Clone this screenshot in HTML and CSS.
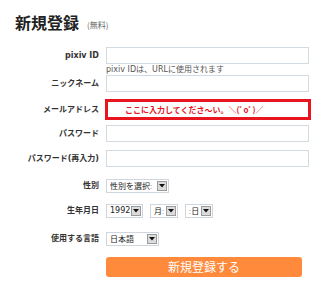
FILE: index.html
```html
<!DOCTYPE html>
<html lang="ja">
<head>
<meta charset="utf-8">
<title>新規登録</title>
<link rel="stylesheet" href="styles.css">
</head>
<body>
<div class="page">
  <h1 class="title">新規登録<span class="free">(無料)</span></h1>
  <form class="form">
    <div class="row row-id">
      <label class="label">pixiv ID</label>
      <div class="field">
        <input class="text-input" type="text">
        <div class="help">pixiv IDは、URLに使用されます</div>
      </div>
    </div>
    <div class="row row-nick">
      <label class="label">ニックネーム</label>
      <div class="field"><input class="text-input" type="text"></div>
    </div>
    <div class="row row-mail">
      <label class="label">メールアドレス</label>
      <div class="field field-alert"><input class="text-input alert-input" type="text" value="ここに入力してくださ～い。＼(ﾟoﾟ)／"></div>
    </div>
    <div class="row row-pass">
      <label class="label">パスワード</label>
      <div class="field"><input class="text-input" type="password"></div>
    </div>
    <div class="row row-pass2">
      <label class="label">パスワード(再入力)</label>
      <div class="field"><input class="text-input" type="password"></div>
    </div>
    <div class="row row-gender">
      <label class="label">性別</label>
      <div class="field">
        <div class="select sel-gender"><span class="sel-text">性別を選択<span class="dim">:</span></span><span class="arrow"><svg width="6" height="4" viewBox="0 0 6 4"><path d="M0 0H6L3 3.5Z" fill="#111"/></svg></span></div>
      </div>
    </div>
    <div class="row row-birth">
      <label class="label">生年月日</label>
      <div class="field field-inline">
        <div class="select sel-year"><span class="sel-text">1992</span><span class="arrow"><svg width="6" height="4" viewBox="0 0 6 4"><path d="M0 0H6L3 3.5Z" fill="#111"/></svg></span></div>
        <div class="select sel-md"><span class="sel-text">月<span class="dim">:</span></span><span class="arrow"><svg width="6" height="4" viewBox="0 0 6 4"><path d="M0 0H6L3 3.5Z" fill="#111"/></svg></span></div>
        <div class="select sel-md"><span class="sel-text"><span class="dim">:</span>日</span><span class="arrow"><svg width="6" height="4" viewBox="0 0 6 4"><path d="M0 0H6L3 3.5Z" fill="#111"/></svg></span></div>
      </div>
    </div>
    <div class="row row-lang">
      <label class="label">使用する言語</label>
      <div class="field">
        <div class="select sel-lang"><span class="sel-text">日本語</span><span class="arrow"><svg width="6" height="4" viewBox="0 0 6 4"><path d="M0 0H6L3 3.5Z" fill="#111"/></svg></span></div>
      </div>
    </div>
    <div class="actions">
      <button class="submit" type="button">新規登録する</button>
    </div>
  </form>
</div>
</body>
</html>
```
FILE: styles.css
```css
html, body {
  margin: 0;
  padding: 0;
  background: #fff;
}
body {
  font-family: "DejaVu Sans", "Noto Sans CJK JP", sans-serif;
  color: #333;
}
.page {
  padding-top: 12px;
}
.title {
  margin: 0 0 0 15px;
  font-family: "Noto Sans CJK JP", sans-serif;
  font-size: 16px;
  line-height: 20px;
  font-weight: bold;
  color: #222;
}
.free {
  font-size: 8px;
  font-weight: normal;
  color: #666;
  margin-left: 8px;
  vertical-align: 1px;
}
.form {
  margin: 12px 0 0 0;
  display: flex;
  flex-direction: column;
}
.row {
  display: flex;
  align-items: flex-start;
}
.label {
  width: 99px;
  flex: none;
  text-align: right;
  font-size: 8px;
  font-weight: bold;
  color: #333;
  line-height: 17px;
  white-space: nowrap;
}
.field {
  margin-left: 7px;
  display: flex;
  flex-direction: column;
}
.field-inline {
  flex-direction: row;
  gap: 7px;
}
.text-input {
  box-sizing: border-box;
  width: 203px;
  height: 17px;
  border: 1px solid #d2dae2;
  margin: 0;
  padding: 0 3px;
  font-family: "DejaVu Sans", "Noto Sans CJK JP", sans-serif;
  font-size: 8px;
  background: #fff;
  outline: none;
}
.help {
  font-size: 8px;
  line-height: 10px;
  margin-top: 1px;
  color: #555;
  white-space: nowrap;
}
.row-mail {
  margin-top: 7px;
}
.row-mail .label {
  line-height: 21px;
}
.field-alert {
  margin-left: 6px;
}
.alert-input {
  width: 206px;
  height: 21px;
  border: 3px solid #e8141e;
  padding-left: 17px;
  color: #e8141e;
  font-weight: bold;
  font-family: "Noto Sans CJK JP", sans-serif;
}
.row-pass {
  margin-top: 5px;
}
.row-pass2 {
  margin-top: 8px;
}
.row-gender {
  margin-top: 12px;
}
.row-birth {
  margin-top: 11px;
}
.row-lang {
  margin-top: 14px;
}
.row-gender .label,
.row-birth .label,
.row-lang .label {
  line-height: 14px;
}
.select {
  box-sizing: border-box;
  height: 14px;
  border: 1px solid #cfd6de;
  display: flex;
  align-items: center;
  justify-content: space-between;
  padding: 0 1px 0 3px;
  background: #fff;
  overflow: hidden;
}
.sel-text {
  font-family: "Noto Sans CJK JP", sans-serif;
  font-size: 8px;
  line-height: 12px;
  color: #222;
  white-space: nowrap;
  overflow: hidden;
}
.dim {
  color: #c9a070;
}
.arrow {
  flex: none;
  box-sizing: border-box;
  width: 10px;
  height: 10px;
  border: 1px solid #9a9a9a;
  background: #dcdcdc;
  display: flex;
  align-items: center;
  justify-content: center;
}
.arrow svg {
  display: block;
}
.sel-gender {
  width: 63px;
}
.sel-year {
  width: 37px;
}
.sel-year .sel-text {
  font-family: "DejaVu Sans", sans-serif;
}
.sel-md {
  width: 28px;
}
.sel-lang {
  width: 53px;
}
.actions {
  margin: 11px 0 0 106px;
}
.submit {
  display: block;
  width: 196px;
  height: 20px;
  border: none;
  border-radius: 3px;
  background: #ff8a3c;
  color: #fff;
  font-family: "Noto Sans CJK JP", sans-serif;
  font-size: 12px;
  line-height: 20px;
  padding: 0;
  text-align: center;
}
```
